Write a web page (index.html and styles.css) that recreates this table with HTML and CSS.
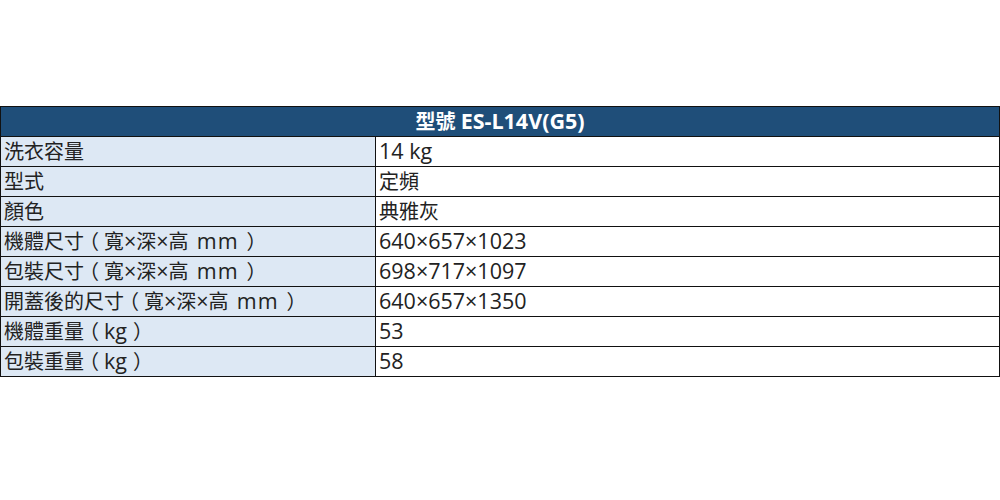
FILE: index.html
```html
<!DOCTYPE html>
<html lang="zh-Hant">
<head>
<meta charset="utf-8">
<link rel="stylesheet" href="styles.css">
</head>
<body>
<div class="page">
<table class="spec">
  <colgroup><col class="c1"><col class="c2"></colgroup>
  <thead>
    <tr><th colspan="2">型號 <span class="en">ES-L14V(G5)</span></th></tr>
  </thead>
  <tbody>
    <tr><td class="k">洗衣容量</td><td><span class="en">14 kg</span></td></tr>
    <tr><td class="k">型式</td><td>定頻</td></tr>
    <tr><td class="k">顏色</td><td>典雅灰</td></tr>
    <tr><td class="k">機體尺寸<span class="lp">（</span>寬<span class="en">×</span>深<span class="en">×</span>高 <span class="en unit">mm</span><span class="rp">）</span></td><td><span class="en">640×657×1023</span></td></tr>
    <tr><td class="k">包裝尺寸<span class="lp">（</span>寬<span class="en">×</span>深<span class="en">×</span>高 <span class="en unit">mm</span><span class="rp">）</span></td><td><span class="en">698×717×1097</span></td></tr>
    <tr><td class="k">開蓋後的尺寸<span class="lp">（</span>寬<span class="en">×</span>深<span class="en">×</span>高 <span class="en unit">mm</span><span class="rp">）</span></td><td><span class="en">640×657×1350</span></td></tr>
    <tr><td class="k">機體重量<span class="lp">（</span><span class="en">kg</span><span class="rp">）</span></td><td><span class="en">53</span></td></tr>
    <tr><td class="k">包裝重量<span class="lp">（</span><span class="en">kg</span><span class="rp">）</span></td><td><span class="en">58</span></td></tr>
  </tbody>
</table>
</div>
</body>
</html>
```

FILE: styles.css
```css
html, body {
  margin: 0;
  padding: 0;
  background: #ffffff;
}
.page {
  padding-top: 106px;
}
.spec {
  width: 1000px;
  border-collapse: collapse;
  table-layout: fixed;
  font-family: "Open Sans", "Noto Sans CJK TC", sans-serif;
  font-size: 20px;
  color: #222222;
}
.c1 { width: 375px; }
.spec th,
.spec td {
  height: 29px;
  border: 1px solid #111;
  line-height: 29px;
  white-space: nowrap;
  overflow: hidden;
}
.spec th {
  background: #1f4e79;
  color: #ffffff;
  font-weight: bold;
  padding: 0;
  text-align: center;
}
.spec td {
  padding: 0 0 0 3px;
  background: #ffffff;
}
.spec td.k {
  background: #dde8f4;
}
.en {
  font-size: 21.5px;
  line-height: 20px;
}
.unit {
  letter-spacing: 1px;
  margin-left: 3px;
  margin-right: 2px;
}
.lp,
.rp {
  font-feature-settings: "halt";
}
.lp {
  margin: 0 5px 0 5px;
}
.rp {
  margin: 0 4px 0 6px;
}
```
